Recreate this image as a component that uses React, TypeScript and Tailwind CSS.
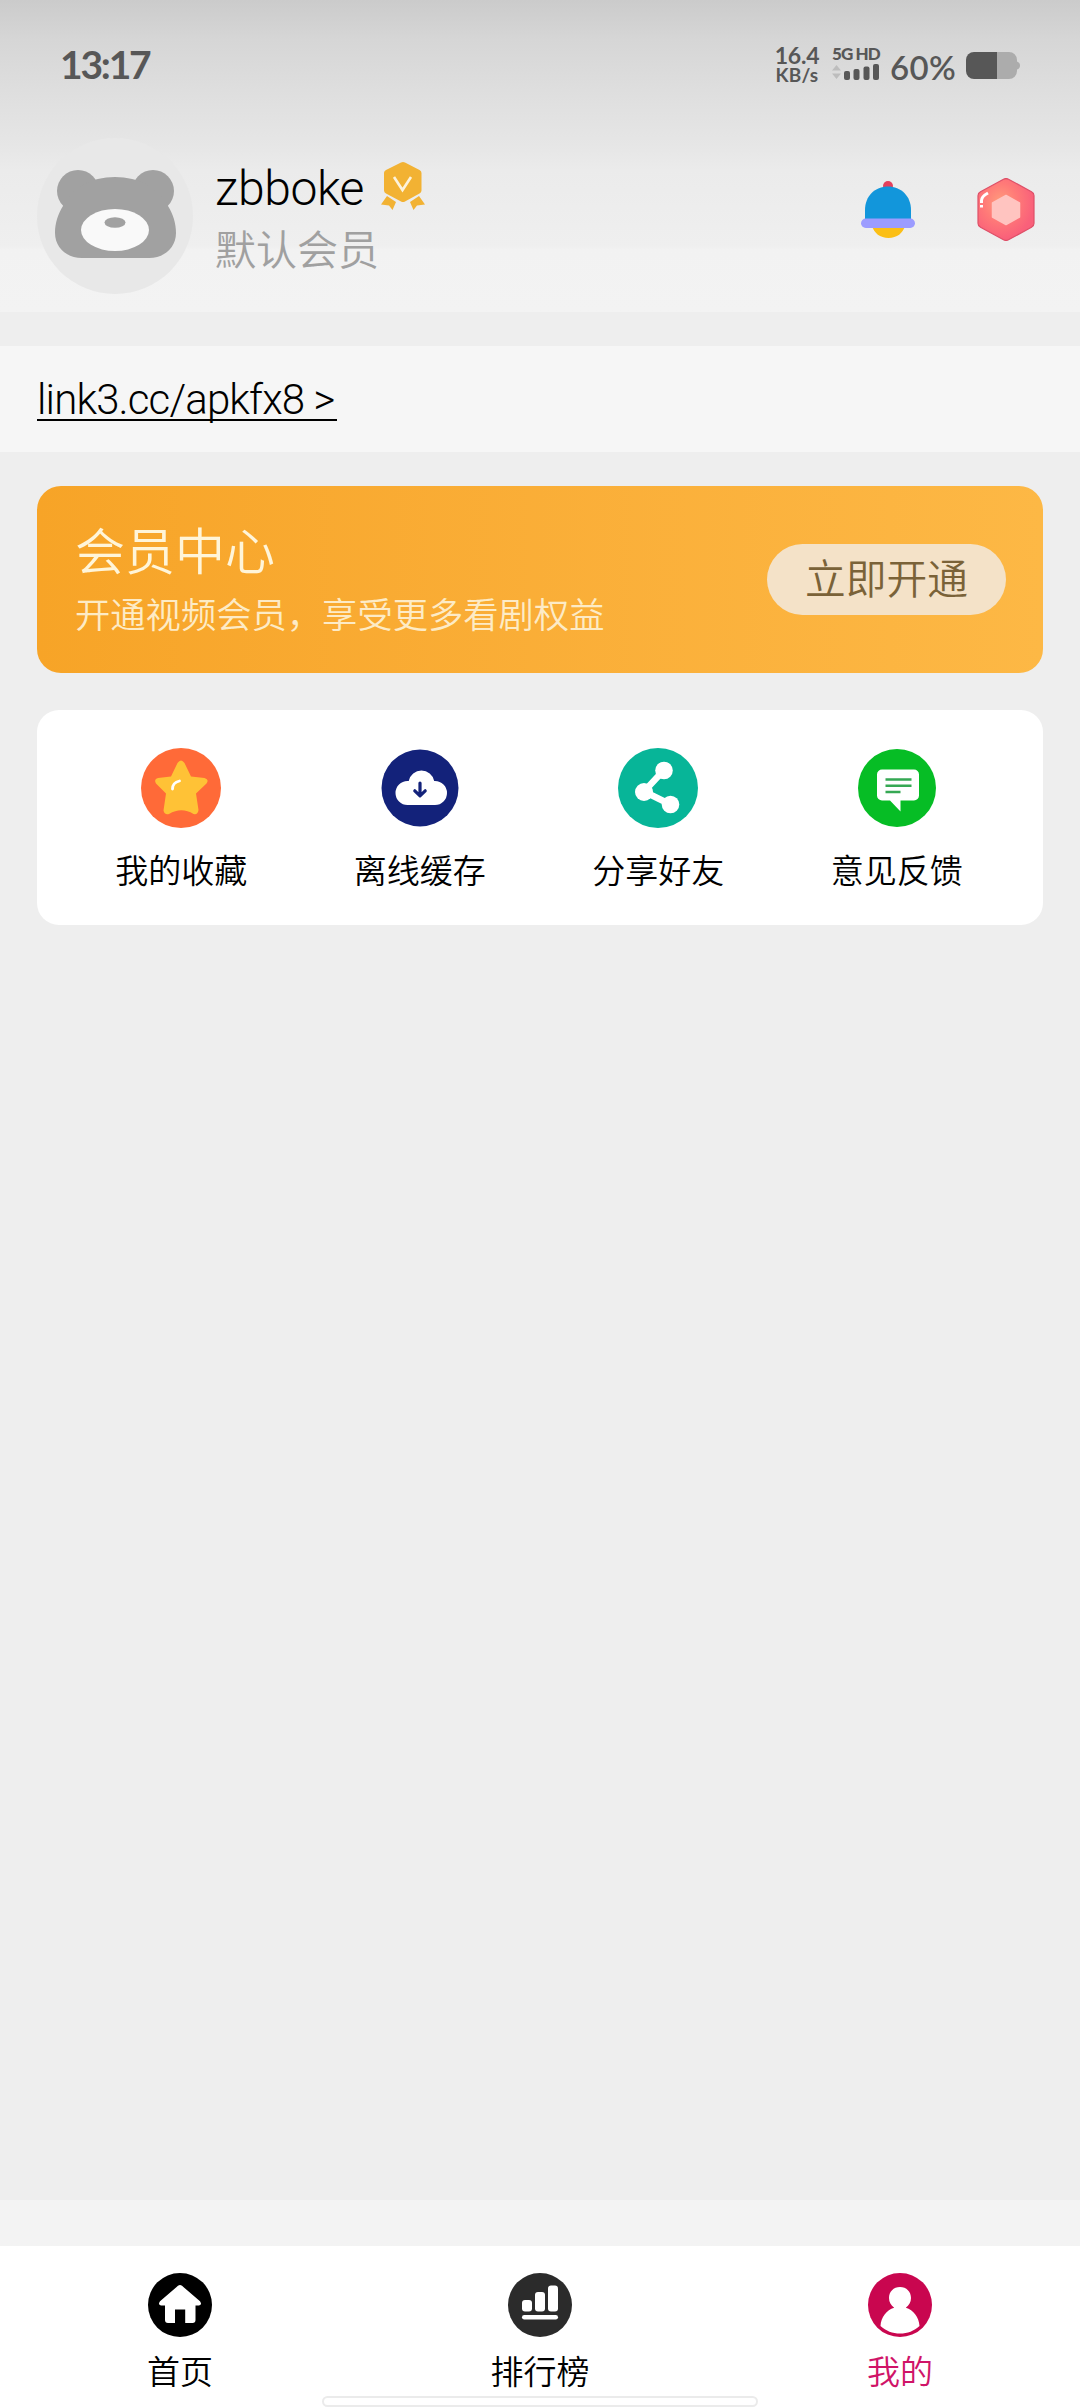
import React from "react";

const cjk = "font-['Roboto','Noto_Sans_CJK_SC',sans-serif]";

function StatusBar() {
  return (
    <div className="flex h-[138px] items-start justify-between pl-[60px] pr-[60px] font-['Lato',sans-serif] text-[#575757]">
      <span className="mt-[40px] text-[39px] leading-[48px] font-bold tracking-[-2.2px]">13:17</span>
      <div className="mt-[44px] flex items-start">
        <div className="flex w-[46px] flex-col items-center text-center font-bold">
          <span className="text-[23px] leading-[23px] tracking-[-0.2px]">16.4</span>
          <span className="text-[19px] leading-[15px] tracking-[0.2px]">KB/s</span>
        </div>
        <div className="ml-[12px] flex w-[48px] flex-col">
          <span className="text-[17px] leading-[19px] font-black whitespace-nowrap tracking-[-0.9px]">5G HD</span>
          <svg className="mt-px h-[16px] w-[48px]" viewBox="0 0 48 16">
            <path d="M0 6.500 4.500 1 9 6.500zM0 9.500 4.500 15 9 9.500z" fill="#bdbdbd" />
            <rect x="12" y="7" width="6" height="9" rx="2" fill="#575757" />
            <rect x="21.500" y="5" width="6" height="11" rx="2" fill="#575757" />
            <rect x="31.500" y="2.500" width="6" height="13.500" rx="2" fill="#575757" />
            <rect x="41" y="0" width="6" height="16" rx="2" fill="#575757" />
          </svg>
        </div>
        <span className="ml-[10px] mt-[3px] w-[70px] whitespace-nowrap text-[33px] leading-[40px] font-semibold tracking-[0.4px]">60%</span>
        <svg className="ml-[6px] mt-[8px] h-[27px] w-[54px]" viewBox="0 0 54 27">
          <path d="M31 0h12a8 8 0 0 1 8 8v1.500q3 1 3 4t-3 4V19a8 8 0 0 1-8 8H31z" fill="#acacac" />
          <path d="M8 0h23v27H8a8 8 0 0 1-8-8V8a8 8 0 0 1 8-8z" fill="#575757" />
        </svg>
      </div>
    </div>
  );
}

function BearAvatar() {
  return (
    <svg className="h-[156px] w-[156px] shrink-0" viewBox="0 0 156 156">
      <circle cx="78" cy="78" r="78" fill="#e8e8e8" />
      <g fill="#a1a1a1">
        <circle cx="41" cy="53" r="21" />
        <circle cx="116" cy="53" r="21" />
        <path d="M26 68C34 50 54 39 78 39s44 11 53 29c5 8 8 17 8 27 0 14-11 25-27 25H45c-16 0-27-11-27-25 0-10 3-19 8-27z" />
      </g>
      <ellipse cx="78" cy="92" rx="34" ry="21" fill="#f9f9f9" />
      <ellipse cx="78" cy="84.500" rx="10.500" ry="5.300" fill="#a1a1a1" />
    </svg>
  );
}

function MedalIcon() {
  return (
    <svg className="h-[48px] w-[44px]" viewBox="0 0 44 48">
      <g fill="#f2b233">
        <path d="M6 34 15 40 11.500 48 8 43.500 0 42.500z" />
        <path d="M38 34 29 40 32.500 48 36 43.500 44 42.500z" />
        <path d="M20 .6q2-1 4 0l14.500 7.500q2 1 2 3v17.500q0 2-2 3L24 39.500q-2 1-4 0L5 31.600q-2-1-2-3V11.100q0-2 2-3z" />
      </g>
      <path d="M13 15l8.500 13L30 15" fill="none" stroke="#fdf3dc" strokeWidth="2.600" />
    </svg>
  );
}

function BellIcon() {
  return (
    <svg className="h-[57px] w-[54px]" viewBox="0 0 54 57">
      <path d="M11 45h33c-2 7-8 12-16.500 12S13 52 11 45z" fill="#fbbf16" />
      <circle cx="27" cy="5" r="5" fill="#e5405c" />
      <path d="M4 39V29C4 15 14 5.500 27 5.500S50 15 50 29v10z" fill="#1296db" />
      <rect x="0" y="37.500" width="54" height="9.500" rx="4.750" fill="#9c9cff" />
    </svg>
  );
}

function GemIcon() {
  return (
    <svg className="h-[63px] w-[58px]" viewBox="0 0 58 63">
      <defs>
        <radialGradient id="gem" cx="0.4" cy="0.38" r="0.6">
          <stop offset="0" stopColor="#ff9c7c" />
          <stop offset="0.500" stopColor="#ff7a78" />
          <stop offset="1" stopColor="#f9607a" />
        </radialGradient>
      </defs>
      <path
        d="M26.500 1.200q2.500-1.300 5 0l23 12.500q2.500 1.300 2.500 4v27.600q0 2.700-2.500 4l-23 12.500q-2.500 1.300-5 0l-23-12.500Q1 48 1 45.300V17.700q0-2.700 2.500-4z"
        fill="url(#gem)"
        stroke="#de5068"
        strokeWidth="1.200"
      />
      <path d="M29 17.500 42.500 25V39L29 46.500 15.500 39V25z" fill="#ffc4c0" stroke="#ffc4c0" strokeWidth="1.500" strokeLinejoin="round" />
      <path d="M4.500 25v-2.500q0-4 6.500-7.500" fill="none" stroke="#fff" strokeWidth="3" />
      <path d="M4.500 27v2.500" stroke="#fff" strokeWidth="3" />
    </svg>
  );
}

function FavoriteIcon() {
  return (
    <svg className="h-[80px] w-[80px]" viewBox="0 0 80 80">
      <circle cx="40" cy="40" r="40" fill="#ff6a38" />
      <path
        d="M36.500 15q3.500-5 7 0l6.500 13.500 13.500 1.500q5 1.500 2 5.500L55 45.500 57.500 62q-.5 5-5 4Q40.500 58.500 28 66q-4.500 1.200-5.500-3.500L25 45.500 15 35.500q-2.500-4.500 2-5.500L30 28.500z"
        fill="#ffc236"
      />
      <path d="M31.500 41c0-4.500 2.500-7 7-8" fill="none" stroke="#fff" strokeWidth="2.800" strokeLinecap="round" />
    </svg>
  );
}

function CacheIcon() {
  return (
    <svg className="h-[80px] w-[80px]" viewBox="0 0 80 80">
      <circle cx="40" cy="40" r="38.500" fill="#13227a" />
      <path d="M27.500 57a12 12 0 0 1 0-24h1.200a13 13 0 0 1 25.500 0H55a12 12 0 0 1 0 24z" fill="#fff" />
      <path d="M40 35v12M34.800 42.800 40 47.800l5.200-5" fill="none" stroke="#13227a" strokeWidth="3.200" strokeLinecap="round" strokeLinejoin="round" />
    </svg>
  );
}

function ShareIcon() {
  return (
    <svg className="h-[80px] w-[80px]" viewBox="0 0 80 80">
      <circle cx="40" cy="40" r="40" fill="#07b598" />
      <path d="M46 22 26 43.500 52.500 56.500" fill="none" stroke="#fff" strokeWidth="6.500" />
      <g fill="#fff">
        <circle cx="46" cy="22.500" r="8.800" />
        <circle cx="26" cy="44" r="9" />
        <circle cx="52.500" cy="56.500" r="8.800" />
      </g>
    </svg>
  );
}

function FeedbackIcon() {
  return (
    <svg className="h-[80px] w-[80px]" viewBox="0 0 80 80">
      <circle cx="40" cy="40" r="39" fill="#06bd25" />
      <path d="M25 21.500h32a5 5 0 0 1 5 5v21a5 5 0 0 1-5 5H43.500v11L33 52.500h-8a5 5 0 0 1-5-5v-21a5 5 0 0 1 5-5z" fill="#fff" />
      <path d="M28.500 31.500h26M28.500 37.700h26M28.500 44h15" stroke="#35a853" strokeWidth="2.600" />
    </svg>
  );
}

function HomeIcon() {
  return (
    <svg className="h-[64px] w-[64px]" viewBox="0 0 64 64">
      <circle cx="32" cy="32" r="32" fill="#000" />
      <path d="M30 12.800q2-1.600 4 0l18 15.500q2.500 3.700-1 4.200h-3.500V47q0 3-3 3h-7.300V36.500H27V50h-7q-3 0-3-3V32.500h-4q-3.500-.5-1-4.200z" fill="#fff" />
    </svg>
  );
}

function RankIcon() {
  return (
    <svg className="h-[64px] w-[64px]" viewBox="0 0 64 64">
      <circle cx="32" cy="32" r="32" fill="#2b2b2b" />
      <g fill="#fff">
        <rect x="14" y="27" width="10" height="11.500" rx="3" />
        <rect x="27" y="19" width="10" height="19.500" rx="3" />
        <rect x="40" y="12.500" width="10" height="26" rx="3" />
        <rect x="14" y="42" width="36" height="4.500" rx="2.250" />
      </g>
    </svg>
  );
}

function MineIcon() {
  return (
    <svg className="h-[64px] w-[64px]" viewBox="0 0 64 64">
      <circle cx="32" cy="32" r="32" fill="#c9064f" />
      <path
        d="M32 14c6.500 0 11 4.700 11 11 0 4-2 7.500-5.200 9.700C45.500 37 51 44 51.500 53 46 58 39.500 60.500 32 60.500s-14-2.500-19.500-7.500C13 44 18.500 37 26.200 34.700 23 32.500 21 29 21 25c0-6.300 4.500-11 11-11z"
        fill="#fff"
      />
    </svg>
  );
}

const shortcuts: { label: string; icon: React.ElementType }[] = [
  { label: "我的收藏", icon: FavoriteIcon },
  { label: "离线缓存", icon: CacheIcon },
  { label: "分享好友", icon: ShareIcon },
  { label: "意见反馈", icon: FeedbackIcon },
];

const tabs: { label: string; icon: React.ElementType; active?: boolean }[] = [
  { label: "首页", icon: HomeIcon },
  { label: "排行榜", icon: RankIcon },
  { label: "我的", icon: MineIcon, active: true },
];

export default function App() {
  return (
    <div className={`${cjk} flex h-[2408px] w-[1080px] flex-col overflow-hidden bg-[#eeeeee] font-[350] text-black`}>
      {/* Header */}
      <header className="h-[312px] shrink-0 bg-[linear-gradient(180deg,#cbcbcb_0px,#d6d6d6_40px,#dedede_90px,#e6e6e6_145px,#ebebeb_170px,#efefef_246px,#f2f2f2_250px,#f3f3f3_312px)]">
        <StatusBar />
        <div className="flex pl-[37px] pr-[45px]">
          <BearAvatar />
          <div className="ml-[22px] flex flex-col">
            <div className="mt-[22px] flex h-[56px] items-start">
              <span className="w-[151px] text-[48px] leading-[58px] whitespace-nowrap tracking-[-0.4px]">zbboke</span>
              <div className="ml-[15px] mt-[2px]">
                <MedalIcon />
              </div>
            </div>
            <span className="mt-[7px] text-[41px] leading-[56px] text-[#a0a0a0]">默认会员</span>
          </div>
          <div className="ml-auto flex items-start gap-[62px]">
            <div className="mt-[43px]">
              <BellIcon />
            </div>
            <div className="mt-[40px]">
              <GemIcon />
            </div>
          </div>
        </div>
      </header>

      {/* Link */}
      <div className="mt-[34px] flex h-[106px] shrink-0 items-start bg-[#f6f6f6] pl-[37px]">
        <a className="mt-[30px] h-[45px] w-[300px] border-b-2 border-black text-[42px] leading-[48px] whitespace-nowrap tracking-[-0.85px]">
          link3.cc/apkfx8 &gt;
        </a>
      </div>

      {/* Membership */}
      <section className="mx-[37px] mt-[34px] flex h-[187px] shrink-0 items-center justify-between rounded-[24px] bg-linear-to-r from-[#f7a427] to-[#fdb845] pl-[38px] pr-[37px]">
        <div className="flex flex-col pt-[5px]">
          <h2 className="text-[50px] leading-[60px] text-[#fff5d9]">会员中心</h2>
          <p className="mt-[8px] text-[35.3px] leading-[50px] text-[#fdebc6]">开通视频会员，享受更多看剧权益</p>
        </div>
        <button className="h-[71px] w-[239px] rounded-full bg-[#f4e2c8] pt-[2px] text-[40.7px] leading-[69px] text-[#7a6238]">立即开通</button>
      </section>

      {/* Shortcuts */}
      <section className="mx-[37px] mt-[37px] grid h-[215px] shrink-0 grid-cols-4 rounded-[22px] bg-white pl-[25px] pr-[27px] pt-[38px]">
        {shortcuts.map((item) => (
          <div key={item.label} className="flex flex-col items-center">
            <item.icon />
            <span className="mt-[19px] text-[33px] leading-[50px]">{item.label}</span>
          </div>
        ))}
      </section>

      {/* Tab bar */}
      <div className="mt-auto h-[46px] shrink-0 bg-[#f3f3f3]" />
      <nav className="flex h-[162px] shrink-0 flex-col bg-white pt-[27px]">
        <div className="grid grid-cols-3">
          {tabs.map((tab) => (
            <div key={tab.label} className={`flex flex-col items-center ${tab.active ? "text-[#d01468]" : ""}`}>
              <tab.icon />
              <span className="mt-[14px] text-[33px] leading-[44px]">{tab.label}</span>
            </div>
          ))}
        </div>
        <div className="mt-auto mb-px h-[11px] w-[436px] shrink-0 self-center rounded-full border-2 border-[#ebebeb] bg-white" />
      </nav>
    </div>
  );
}
